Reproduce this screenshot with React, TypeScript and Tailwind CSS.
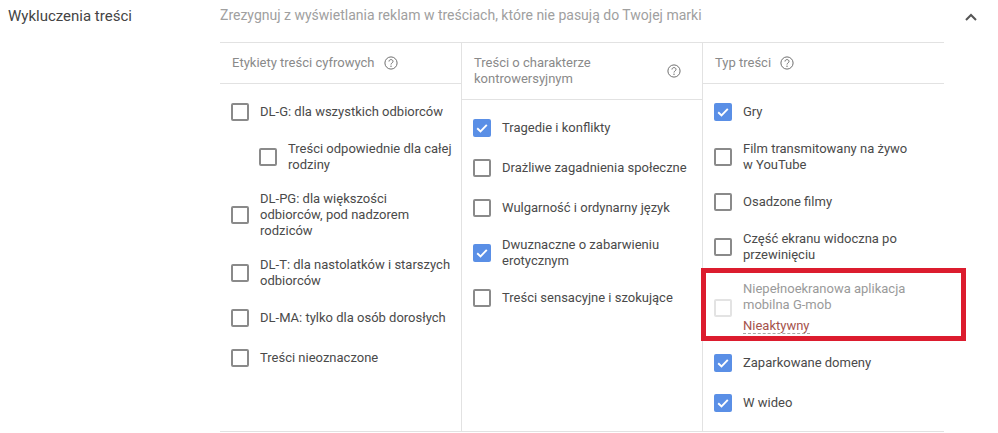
import React from "react";

interface Option {
  label: React.ReactNode;
  checked?: boolean;
  indent?: boolean;
}

const digitalLabels: Option[] = [
  { label: "DL-G: dla wszystkich odbiorców" },
  { label: "Treści odpowiednie dla całej rodziny", indent: true },
  { label: <>DL-PG: dla większości<br />odbiorców, pod nadzorem<br />rodziców</> },
  { label: "DL-T: dla nastolatków i starszych odbiorców" },
  { label: "DL-MA: tylko dla osób dorosłych" },
  { label: "Treści nieoznaczone" },
];

const sensitive: Option[] = [
  { label: "Tragedie i konflikty", checked: true },
  { label: "Drażliwe zagadnienia społeczne" },
  { label: "Wulgarność i ordynarny język" },
  { label: "Dwuznaczne o zabarwieniu erotycznym", checked: true },
  { label: "Treści sensacyjne i szokujące" },
];

const Checkbox = ({ checked, disabled }: { checked?: boolean; disabled?: boolean }) => {
  if (checked) {
    return (
      <span className="flex h-[18px] w-[18px] shrink-0 items-center justify-center rounded-[2px] bg-[#5a8fe6]">
        <svg width="14" height="14" viewBox="0 0 14 14" fill="none">
          <path d="M2.2 7.2l3.3 3.2 6.3-6.6" stroke="#ffffff" strokeWidth="1.9" />
        </svg>
      </span>
    );
  }
  return (
    <span
      className={
        disabled
          ? "h-[18px] w-[18px] shrink-0 rounded-[2px] border-2 border-[#e3e3e3]"
          : "h-[18px] w-[18px] shrink-0 rounded-[2px] border-2 border-[#8a8a8a]"
      }
    />
  );
};

const HelpIcon = () => (
  <svg width="14" height="14" viewBox="0 0 14 14" fill="none" className="shrink-0">
    <circle cx="7" cy="7" r="6.1" stroke="#6f6f6f" strokeWidth="1" />
    <path d="M5 5.500C5 4.300 5.900 3.600 7 3.600s2 .7 2 1.800c0 1.500-2 1.600-2 3.100" stroke="#6f6f6f" strokeWidth="1" />
    <circle cx="7" cy="10.200" r=".7" fill="#6f6f6f" />
  </svg>
);

const Row = ({ label, checked, indent }: Option) => (
  <div className={indent ? "flex min-h-10 items-center py-[9px] pl-[39px] pr-1" : "flex min-h-10 items-center py-[9px] pl-[11px] pr-1"}>
    <Checkbox checked={checked} />
    <div className="ml-[11px] text-[13px] leading-4 text-[#4a4a4a]">{label}</div>
  </div>
);

export default function App() {
  return (
    <div className="relative h-[433px] w-[998px] overflow-hidden bg-white font-['Roboto',sans-serif]">
      <div className="flex">
        <div className="w-[220px] pl-2 pt-[7px] text-[15px] leading-[18px] text-[#444444]">Wykluczenia treści</div>
        <div className="w-[724px]">
          <div className="h-[42px] pt-[6px] text-sm leading-[18px] text-[#a0a0a0]">
            Zrezygnuj z wyświetlania reklam w treściach, które nie pasują do Twojej marki
          </div>
          <div className="grid h-[390px] grid-cols-[242px_241px_241px] border-y border-[#e2e2e2]">
            <div className="border-r border-[#e2e2e2]">
              <div className="flex h-[41px] items-center gap-[10px] border-b border-[#e2e2e2] pl-3 text-[13px] text-[#8a8a8a]">
                Etykiety treści cyfrowych
                <HelpIcon />
              </div>
              <div className="pt-2">
                {digitalLabels.map((o, i) => (
                  <Row key={i} {...o} />
                ))}
              </div>
            </div>
            <div className="border-r border-[#e2e2e2]">
              <div className="flex h-[57px] items-center justify-between border-b border-[#e2e2e2] pl-3 pr-[21px] text-[13px] leading-4 text-[#8a8a8a]">
                <div>
                  Treści o charakterze
                  <br />
                  kontrowersyjnym
                </div>
                <HelpIcon />
              </div>
              <div className="pt-2">
                {sensitive.map((o, i) => (
                  <Row key={i} {...o} />
                ))}
              </div>
            </div>
            <div>
              <div className="flex h-[41px] items-center gap-[9px] border-b border-[#e2e2e2] pl-3 text-[13px] text-[#8a8a8a]">
                Typ treści
                <HelpIcon />
              </div>
              <div className="pt-2">
                <Row label="Gry" checked />
                <Row label={<>Film transmitowany na żywo<br />w YouTube</>} />
                <Row label="Osadzone filmy" />
                <Row label={<>Część ekranu widoczna po<br />przewinięciu</>} />
                <div className="relative flex items-center py-[9px] pl-[11px] pr-1">
                  <Checkbox disabled />
                  <div className="ml-[11px] text-[13px] leading-4 text-[#9a9a9a]">
                    Niepełnoekranowa aplikacja
                    <br />
                    mobilna G-mob
                    <div className="mt-[5px] w-fit border-b border-dashed border-[#a9a9a9] leading-[15px] text-[#a5524c]">Nieaktywny</div>
                  </div>
                  <div className="absolute -left-[2px] -right-[22px] -top-1 bottom-[2px] border-[5px] border-[#dc1c2e]" />
                </div>
                <Row label="Zaparkowane domeny" checked />
                <Row label="W wideo" checked />
              </div>
            </div>
          </div>
        </div>
        <div className="flex flex-1 justify-center pt-[13px] pr-[8px]">
          <svg width="12" height="8" viewBox="0 0 12 8" fill="none" className="ml-2">
            <path d="M1 7l5-5 5 5" stroke="#555555" strokeWidth="2" />
          </svg>
        </div>
      </div>
    </div>
  );
}
